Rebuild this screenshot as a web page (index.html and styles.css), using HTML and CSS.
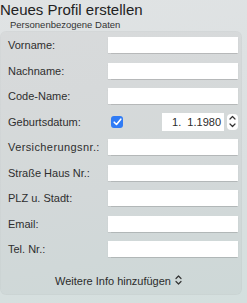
FILE: index.html
```html
<!DOCTYPE html>
<html lang="de">
<head>
    <meta charset="UTF-8">
    <title>Neues Profil erstellen</title>
    <link rel="stylesheet" href="styles.css">
</head>
<body>
    <h1 class="title">Neues Profil erstellen</h1>
    <div class="subtitle">Personenbezogene Daten</div>
    <div class="group">
        <div class="row">
            <label>Vorname:</label>
            <input class="field" type="text">
        </div>
        <div class="row">
            <label>Nachname:</label>
            <input class="field" type="text">
        </div>
        <div class="row">
            <label>Code-Name:</label>
            <input class="field" type="text">
        </div>
        <div class="row">
            <label>Geburtsdatum:</label>
            <div class="date-line">
                <span class="check">
                    <svg width="9" height="8" viewBox="0 0 9 8"><path d="M1.2 4.2 L3.5 6.5 L7.8 1.2" fill="none" stroke="#fff" stroke-width="1.6" stroke-linecap="round" stroke-linejoin="round"/></svg>
                </span>
                <span class="date">1.&nbsp;&nbsp;1.1980</span>
                <span class="stepper">
                    <svg width="9" height="15" viewBox="0 0 9 15"><path d="M2 5 L4.5 2.5 L7 5 M2 10 L4.5 12.5 L7 10" fill="none" stroke="#333" stroke-width="1.2" stroke-linecap="round" stroke-linejoin="round"/></svg>
                </span>
            </div>
        </div>
        <div class="row">
            <label class="wide">Versicherungsnr.:</label>
            <input class="field" type="text">
        </div>
        <div class="row">
            <label>Straße Haus Nr.:</label>
            <input class="field" type="text">
        </div>
        <div class="row">
            <label>PLZ u. Stadt:</label>
            <input class="field" type="text">
        </div>
        <div class="row">
            <label>Email:</label>
            <input class="field" type="text">
        </div>
        <div class="row">
            <label>Tel. Nr.:</label>
            <input class="field" type="text">
        </div>
        <div class="more">
            Weitere Info hinzufügen
            <svg width="7" height="10" viewBox="0 0 7 10"><path d="M1 3.5 L3.5 1 L6 3.5 M1 6.5 L3.5 9 L6 6.5" fill="none" stroke="#333" stroke-width="1.2" stroke-linecap="round" stroke-linejoin="round"/></svg>
        </div>
    </div>
</body>
</html>
```

FILE: styles.css
```css
body {
    margin: 0;
    width: 247px;
    height: 303px;
    overflow: hidden;
    font-family: "Liberation Sans", Arial, sans-serif;
    color: #2b2b2b;
    background: linear-gradient(170deg, #e0e3e4 0%, #dadfe0 60%, #d4dfde 100%);
}
.title {
    margin: 0;
    padding-top: 1px;
    font-size: 15px;
    font-weight: normal;
    line-height: 18px;
    color: #222;
}
.subtitle {
    padding-left: 10px;
    font-size: 9.5px;
    line-height: 12px;
    color: #333;
}
.group {
    box-sizing: border-box;
    width: 242px;
    height: 264px;
    padding: 5px 5px 0 7px;
    border-radius: 6px;
    background: rgba(0, 0, 0, 0.03);
    border: 1px solid rgba(0, 0, 0, 0.02);
    display: flex;
    flex-direction: column;
    gap: 9.5px;
}
.row {
    display: grid;
    grid-template-columns: 100px 130px;
    align-items: center;
    height: 16px;
}
.row label {
    font-size: 11px;
    color: #2e2e2e;
}
.row label.wide {
    letter-spacing: 0.4px;
}
.field {
    box-sizing: border-box;
    width: 130px;
    height: 16px;
    margin: 0;
    border: none;
    background: #fff;
    box-shadow: 0 0.5px 1px rgba(0, 0, 0, 0.15);
}
.date-line {
    display: flex;
    align-items: center;
    height: 16px;
}
.check {
    width: 12px;
    height: 12px;
    margin-left: 3px;
    border-radius: 3px;
    background: #2f7bf5;
    display: flex;
    align-items: center;
    justify-content: center;
}
.date {
    margin-left: 39px;
    width: 62px;
    height: 18px;
    box-sizing: border-box;
    padding-right: 3px;
    background: #fff;
    font-size: 11px;
    line-height: 18px;
    text-align: right;
    color: #2b2b2b;
}
.stepper {
    margin-left: 3px;
    width: 11px;
    height: 16px;
    border-radius: 4px;
    background: #fff;
    display: flex;
    align-items: center;
    justify-content: center;
}
.more {
    margin-top: 8px;
    padding-right: 7px;
    font-size: 11px;
    text-align: center;
    color: #2b2b2b;
}
.more svg {
    margin-left: 1px;
}
```
